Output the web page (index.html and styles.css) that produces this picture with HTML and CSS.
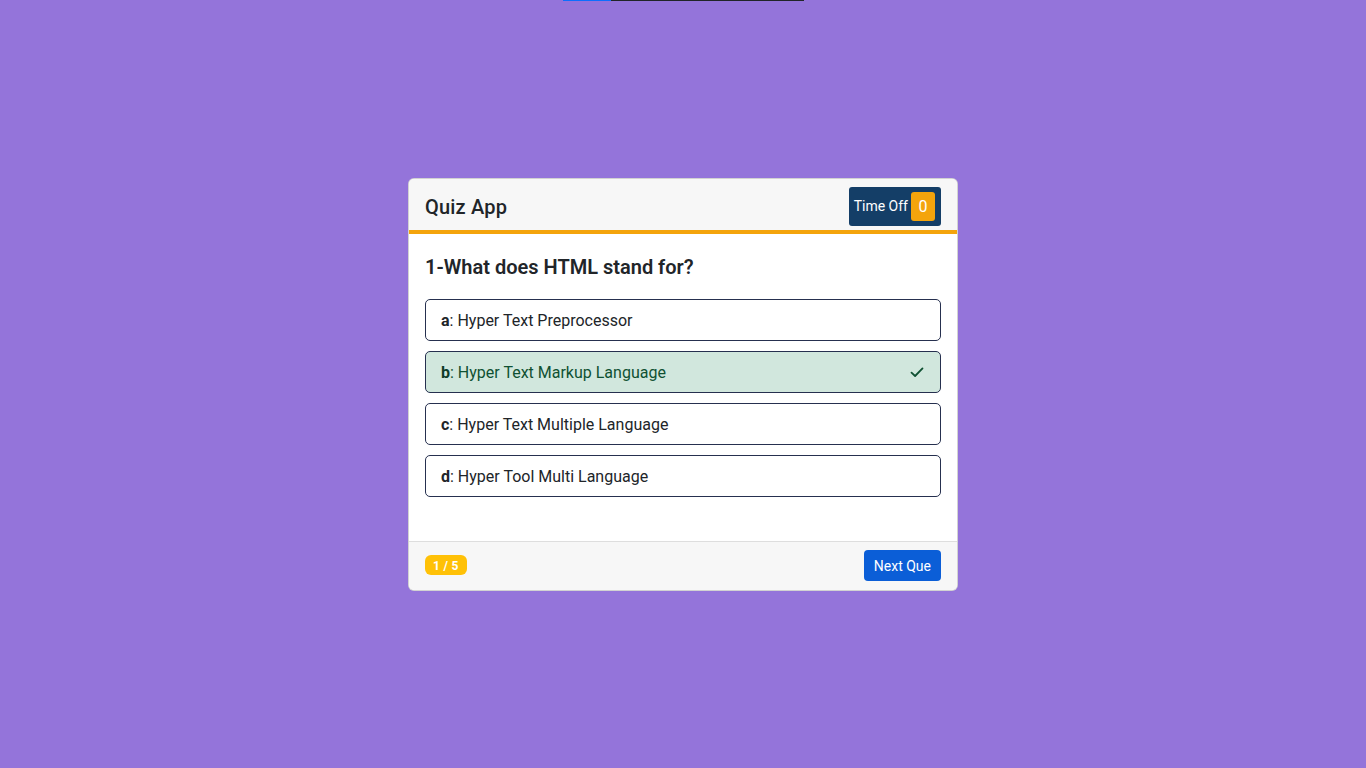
FILE: index.html
```html
<!DOCTYPE html>
<html lang="en">
<head>
<meta charset="utf-8">
<title>Quiz App</title>
<link rel="stylesheet" href="styles.css">
</head>
<body>
<div class="top-progress"><div class="top-progress-fill" style="width:20%"></div></div>
<main class="quiz-card">
  <header class="quiz-header">
    <h1 class="quiz-title">Quiz App</h1>
    <div class="timer">
      <span class="timer-label">Time Off</span>
      <span class="timer-count">0</span>
    </div>
  </header>
  <section class="quiz-body">
    <h2 class="question">1-What does HTML stand for?</h2>
    <ul class="options">
      <li class="option"><span><b>a</b>: Hyper Text Preprocessor</span></li>
      <li class="option option-correct"><span><b>b</b>: Hyper Text Markup Language</span>
        <svg class="check" viewBox="0 0 16 16" width="16" height="16"><path d="M2.5 8.6l3.6 3.4 7.4-7.6" fill="none" stroke="currentColor" stroke-width="1.8" stroke-linecap="round" stroke-linejoin="round"/></svg>
      </li>
      <li class="option"><span><b>c</b>: Hyper Text Multiple Language</span></li>
      <li class="option"><span><b>d</b>: Hyper Tool Multi Language</span></li>
    </ul>
  </section>
  <footer class="quiz-footer">
    <span class="counter">1 / 5</span>
    <button class="next-btn">Next Que</button>
  </footer>
</main>
</body>
</html>
```
FILE: styles.css
```css
* { box-sizing: border-box; }
html, body { margin: 0; padding: 0; }
body {
  min-height: 100vh;
  background: #9474da;
  font-family: Roboto, "Noto Sans", sans-serif;
  color: #212529;
  display: flex;
  align-items: center;
  justify-content: center;
}
.top-progress {
  position: fixed;
  top: 0;
  left: 563px;
  width: 241px;
  height: 1px;
  background: #212529;
}
.top-progress-fill {
  height: 100%;
  background: #0d6efd;
}
.quiz-card {
  width: 550px;
  background: #fff;
  border: 1px solid rgba(0,0,0,.175);
  border-radius: 6px;
  overflow: hidden;
}
.quiz-header {
  display: flex;
  align-items: center;
  justify-content: space-between;
  height: 55px;
  padding: 4px 16px 0;
  background: #f7f7f7;
  border-bottom: 4px solid #f4a40c;
}
.quiz-title {
  margin: 0;
  padding-top: 1px;
  font-size: 20px;
  font-weight: 500;
  line-height: 1.2;
  letter-spacing: 0.2px;
}
.timer {
  display: flex;
  align-items: center;
  gap: 3px;
  height: 39px;
  padding: 0 6px 0 5px;
  background: #143e67;
  border-radius: 3px;
  color: #fff;
  font-size: 14px;
}
.timer-count {
  display: flex;
  align-items: center;
  justify-content: center;
  width: 24px;
  height: 29px;
  background: #f4a40c;
  border-radius: 3px;
  font-size: 16px;
}
.quiz-body {
  padding: 21px 16px 44px;
}
.question {
  margin: 0 0 20px;
  font-size: 20px;
  font-weight: 600;
  line-height: 24px;
}
.options {
  list-style: none;
  margin: 0;
  padding: 0;
  display: flex;
  flex-direction: column;
  gap: 10px;
}
.option {
  display: flex;
  align-items: center;
  justify-content: space-between;
  height: 42px;
  padding: 1px 15px 0;
  border: 1px solid #26304f;
  border-radius: 5px;
  font-size: 16px;
}
.option-correct {
  background: #d1e7dd;
  color: #0f5132;
}
.option-correct b { color: #0f3d28; }
.check { color: #0f5132; }
.quiz-footer {
  display: flex;
  align-items: center;
  justify-content: space-between;
  padding: 8px 16px 9px;
  background: #f7f7f7;
  border-top: 1px solid #dedede;
}
.counter {
  display: inline-block;
  padding: 5px 8px 3px;
  background: #ffc107;
  border-radius: 6px;
  color: #fff;
  font-size: 12px;
  font-weight: 700;
  line-height: 12px;
  letter-spacing: 0.3px;
}
.next-btn {
  height: 31px;
  padding: 1px 10px 0;
  background: #0b5ed7;
  border: none;
  border-radius: 4px;
  color: #fff;
  font-family: inherit;
  font-size: 14px;
}
```
